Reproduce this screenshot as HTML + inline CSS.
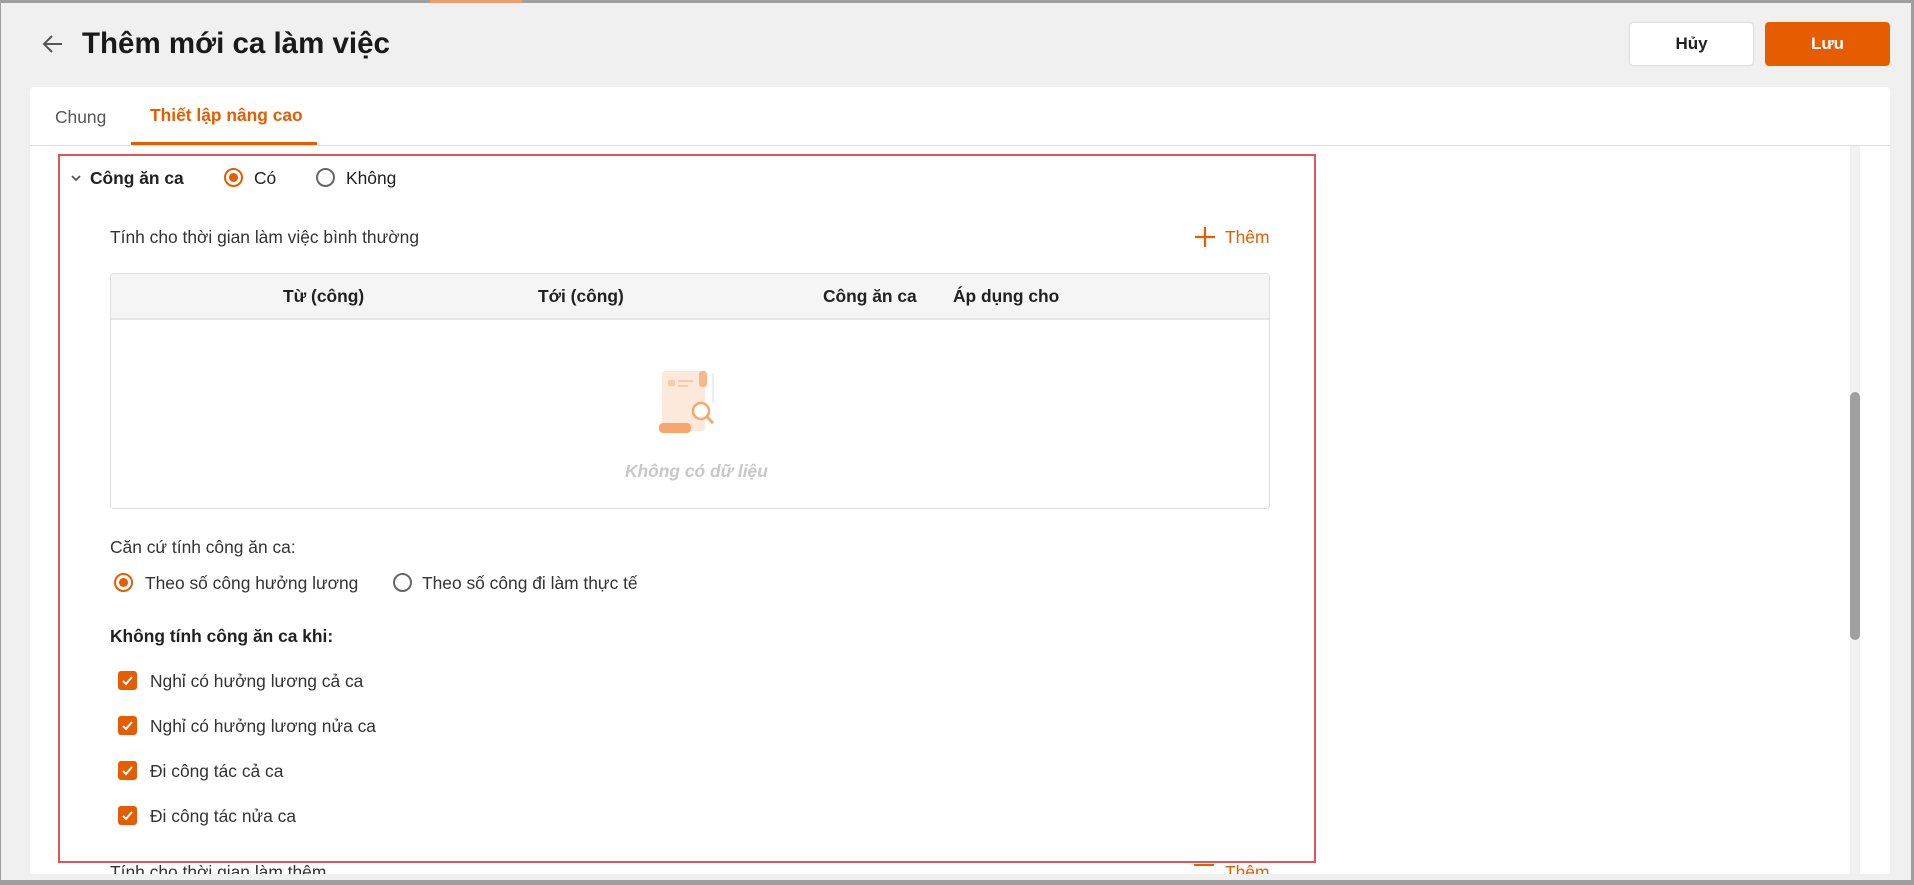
<!DOCTYPE html>
<html><head><meta charset="utf-8"><style>
*{margin:0;padding:0;box-sizing:border-box}
html,body{width:1914px;height:885px;overflow:hidden}
body{background:#f0f0f0;font-family:"Liberation Sans",sans-serif;color:#212121;position:relative}
.a{position:absolute}
.t{font-size:17.4px;white-space:nowrap;line-height:20px}
.radio{position:absolute;width:19px;height:19px;border-radius:50%;border:2px solid #666}
.radio.on{border-color:#e65c00}
.radio.on:after{content:"";position:absolute;left:3px;top:3px;width:9px;height:9px;border-radius:50%;background:#e65c00}
.cb{position:absolute;width:19px;height:19px;border-radius:3px;background:#e65c00}
.cb svg{position:absolute;left:3px;top:3px}
</style></head><body>
<div class="a" style="left:0;top:0;width:1914px;height:3px;background:#9e9e9e"></div>
<div class="a" style="left:0;top:0;width:1px;height:885px;background:#a0a0a0"></div>
<div class="a" style="left:1911px;top:0;width:3px;height:885px;background:#9e9e9e"></div>
<div class="a" style="left:0;top:880px;width:1914px;height:5px;background:#9e9e9e"></div>
<div class="a" style="left:430px;top:0;width:92px;height:3px;background:#e8a070"></div>
<svg class="a" style="left:42px;top:34px" width="22" height="20" viewBox="0 0 22 20"><path d="M20 10H3M10 2L2 10l8 8" fill="none" stroke="#555" stroke-width="2"/></svg>
<div class="a" style="left:82px;top:27px;font-size:29.5px;font-weight:bold;line-height:34px;color:#1a1a1a">Thêm mới ca làm việc</div>
<div class="a" style="left:1629px;top:22px;width:125px;height:44px;background:#fff;border:1px solid #ddd;border-radius:4px;text-align:center;line-height:42px;font-size:17px;font-weight:bold">Hủy</div>
<div class="a" style="left:1765px;top:22px;width:125px;height:44px;background:#e65c00;border-radius:4px;text-align:center;line-height:44px;font-size:17px;font-weight:bold;color:#fff">Lưu</div>
<div class="a" style="left:30px;top:87px;width:1860px;height:787px;background:#fff;border-radius:4px"></div>
<div class="a" style="left:30px;top:145px;width:1860px;height:1px;background:#e0e0e0"></div>
<div class="a t" style="left:55px;top:107px;color:#555">Chung</div>
<div class="a t" style="left:150px;top:105px;color:#e65c00;font-weight:bold">Thiết lập nâng cao</div>
<div class="a" style="left:131px;top:142px;width:186px;height:3px;background:#e65c00"></div>
<div class="a" style="left:1850px;top:146px;width:10px;height:728px;background:#f1f1f1"></div>
<div class="a" style="left:1850px;top:392px;width:10px;height:248px;background:#a0a0a0;border-radius:5px"></div>
<div class="a" style="left:58px;top:154px;width:1258px;height:709px;border:2px solid #e05555"></div>
<svg class="a" style="left:70px;top:173px" width="12" height="10" viewBox="0 0 12 10"><path d="M2 3l4 4 4-4" fill="none" stroke="#555" stroke-width="1.8"/></svg>
<div class="a t" style="left:90px;top:168px;font-weight:bold">Công ăn ca</div>
<div class="radio on" style="left:224px;top:168px"></div>
<div class="a t" style="left:254px;top:168px">Có</div>
<div class="radio" style="left:316px;top:168px"></div>
<div class="a t" style="left:346px;top:168px">Không</div>
<div class="a t" style="left:110px;top:227px;color:#333">Tính cho thời gian làm việc bình thường</div>
<svg class="a" style="left:1194px;top:226px" width="22" height="22"><path d="M11 1v20M1 11h20" stroke="#e65c00" stroke-width="2.2"/></svg>
<div class="a t" style="left:1225px;top:227px;color:#e65c00">Thêm</div>
<div class="a" style="left:110px;top:273px;width:1160px;height:236px;border:1px solid #e0e0e0;border-radius:4px;overflow:hidden">
<div style="height:46px;background:#f5f5f5;border-bottom:2px solid #e5e5e5"></div></div>
<div class="a t" style="left:283px;top:286px;font-weight:bold">Từ (công)</div>
<div class="a t" style="left:538px;top:286px;font-weight:bold">Tới (công)</div>
<div class="a t" style="left:823px;top:286px;font-weight:bold">Công ăn ca</div>
<div class="a t" style="left:953px;top:286px;font-weight:bold">Áp dụng cho</div>
<svg class="a" style="left:655px;top:368px" width="70" height="70" viewBox="0 0 70 70">
<rect x="7" y="3" width="43" height="60" rx="3" fill="#fde8dc"/>
<rect x="44" y="3" width="8" height="16" rx="3" fill="#f7b88a"/>
<rect x="57" y="5" width="2" height="30" fill="#eee"/>
<rect x="13" y="12" width="7" height="6" rx="2" fill="#f9c9a8"/>
<rect x="23" y="12" width="15" height="2" fill="#f9c9a8"/><rect x="23" y="17" width="10" height="2" fill="#f9c9a8"/>
<rect x="4" y="55" width="32" height="10" rx="4" fill="#f7a76e"/>
<circle cx="46" cy="43" r="8" fill="#fff" stroke="#f7a76e" stroke-width="2.5"/><path d="M52 49l6 6" stroke="#f7a76e" stroke-width="3"/>
</svg>
<div class="a t" style="left:625px;top:461px;color:#c8c8c8;font-style:italic;font-weight:bold">Không có dữ liệu</div>
<div class="a t" style="left:110px;top:537px;color:#333">Căn cứ tính công ăn ca:</div>
<div class="radio on" style="left:114px;top:573px"></div>
<div class="a t" style="left:145px;top:573px;color:#333">Theo số công hưởng lương</div>
<div class="radio" style="left:393px;top:573px"></div>
<div class="a t" style="left:422px;top:573px;color:#333">Theo số công đi làm thực tế</div>
<div class="a t" style="left:110px;top:626px;font-weight:bold">Không tính công ăn ca khi:</div>
<div class="cb" style="left:118px;top:671px"><svg width="13" height="13"><path d="M2 7l3 3 6-7" fill="none" stroke="#fff" stroke-width="2"/></svg></div>
<div class="a t" style="left:150px;top:671px;color:#333">Nghỉ có hưởng lương cả ca</div>
<div class="cb" style="left:118px;top:716px"><svg width="13" height="13"><path d="M2 7l3 3 6-7" fill="none" stroke="#fff" stroke-width="2"/></svg></div>
<div class="a t" style="left:150px;top:716px;color:#333">Nghỉ có hưởng lương nửa ca</div>
<div class="cb" style="left:118px;top:761px"><svg width="13" height="13"><path d="M2 7l3 3 6-7" fill="none" stroke="#fff" stroke-width="2"/></svg></div>
<div class="a t" style="left:150px;top:761px;color:#333">Đi công tác cả ca</div>
<div class="cb" style="left:118px;top:806px"><svg width="13" height="13"><path d="M2 7l3 3 6-7" fill="none" stroke="#fff" stroke-width="2"/></svg></div>
<div class="a t" style="left:150px;top:806px;color:#333">Đi công tác nửa ca</div>
<div class="a" style="left:30px;top:864px;width:1820px;height:10px;overflow:hidden">
<div class="t" style="position:absolute;left:80px;top:-2px;color:#333">Tính cho thời gian làm thêm</div>
<div class="t" style="position:absolute;left:1195px;top:-2px;color:#e65c00">Thêm</div>
<div style="position:absolute;left:1164px;top:0;width:20px;height:2px;background:#e65c00"></div>
</div>
</body></html>
